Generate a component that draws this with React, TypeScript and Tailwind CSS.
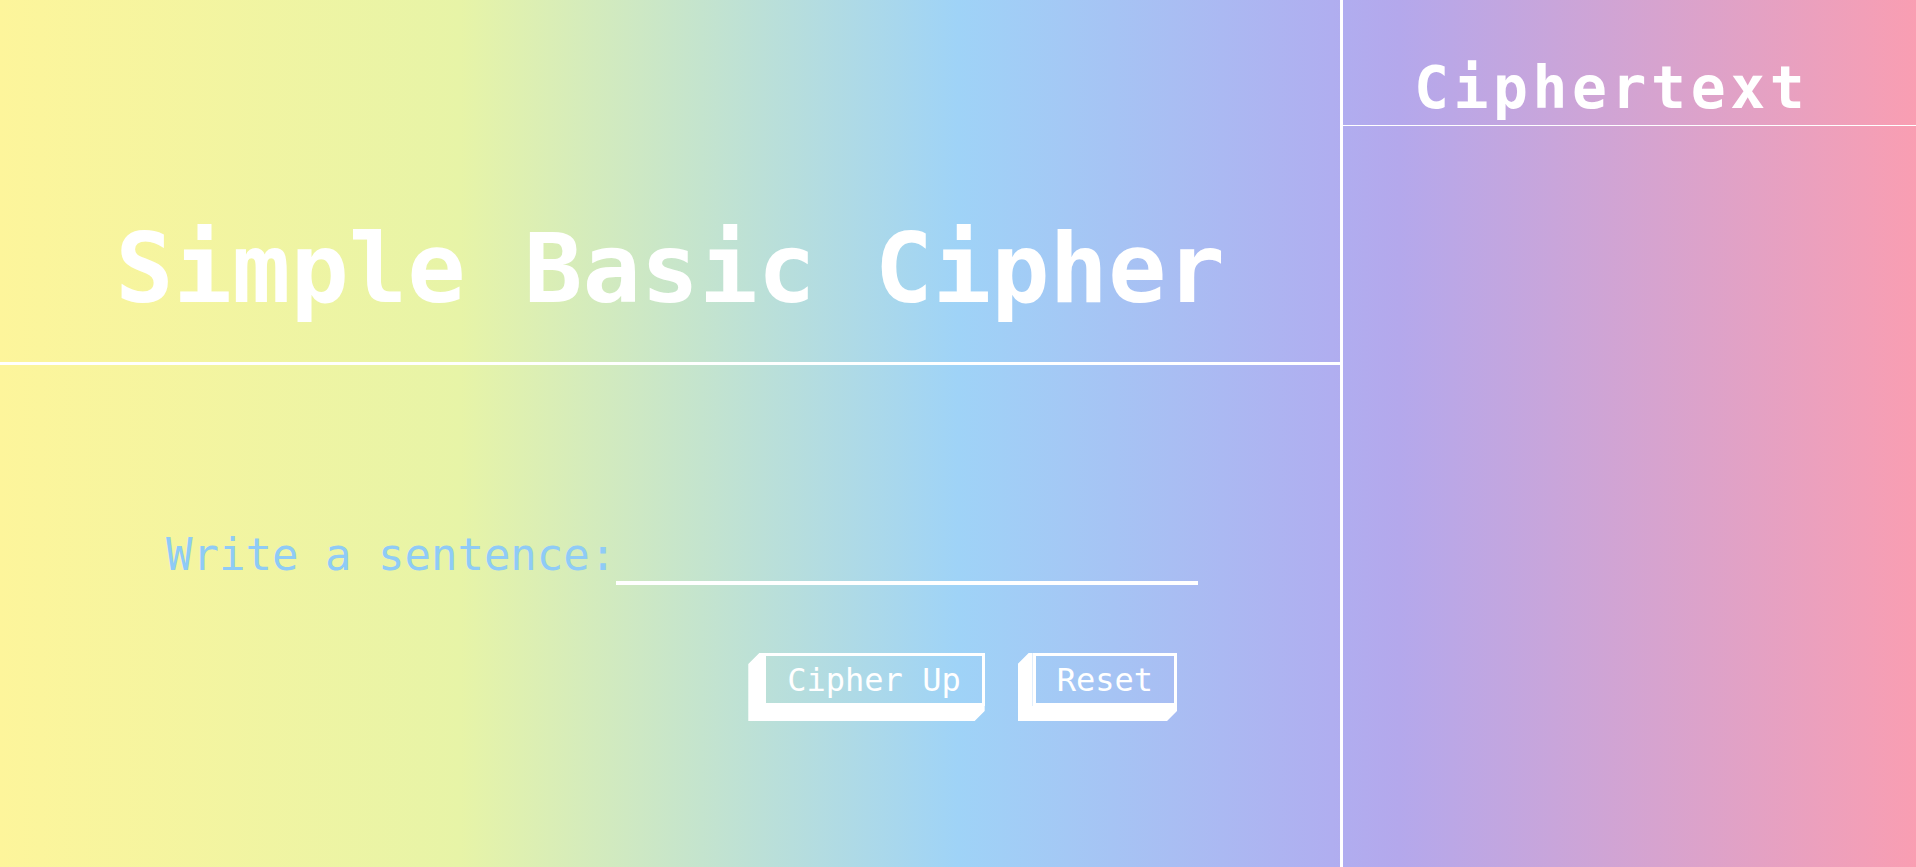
import React, { useState } from "react";

function ShadowButton({ label, onClick }: { label: string; onClick?: () => void }) {
  return (
    <button
      type="button"
      onClick={onClick}
      className="relative flex pl-[15px] pb-[15px] text-white cursor-pointer"
    >
      <span className="absolute inset-0 bg-white [clip-path:polygon(11px_0,15px_0,15px_calc(100%_-_15px),100%_calc(100%_-_15px),100%_calc(100%_-_10px),calc(100%_-_10px)_100%,0_100%,0_11px)]" />
      <span className="relative block border-[3px] border-white px-[21px] h-[53px] leading-[49px] text-[32px] whitespace-nowrap">
        {label}
      </span>
    </button>
  );
}

export default function App() {
  const [text, setText] = useState("");
  return (
    <div className="flex h-screen w-full overflow-hidden font-['DejaVu_Sans_Mono',monospace] bg-[linear-gradient(to_right,#fdf59b_0%,#e7f4a7_24%,#9fd3f7_50%,#b0aef0_69.5%,#b4a8ec_73%,#f99eb2_100%)]">
      <div className="flex w-[1343px] shrink-0 flex-col border-r-[3px] border-white">
        <header className="h-[365px] shrink-0 border-b-[3px] border-white pt-[220px] text-center">
          <h1 className="text-[97px] font-bold leading-none text-white whitespace-nowrap">
            Simple Basic Cipher
          </h1>
        </header>
        <main className="flex flex-col pt-[168px]">
          <form
            className="flex flex-col"
            onSubmit={(e) => e.preventDefault()}
          >
            <div className="flex items-end pl-[166px]">
              <label
                htmlFor="sentence"
                className="pb-[8px] text-[44px] leading-none text-[#8fcbf6] whitespace-nowrap"
              >
                Write a sentence:
              </label>
              <input
                id="sentence"
                value={text}
                onChange={(e) => setText(e.target.value)}
                className="h-[40px] w-[582px] border-b-4 border-white bg-transparent text-[28px] text-white outline-none"
              />
            </div>
            <div className="mt-[68px] flex justify-end gap-[33px] pr-[163px]">
              <ShadowButton label="Cipher Up" />
              <ShadowButton label="Reset" onClick={() => setText("")} />
            </div>
          </form>
        </main>
      </div>
      <aside className="flex flex-1 flex-col">
        <div className="h-[126px] border-b border-white pl-[71px] pt-[59px]">
          <h2 className="text-[58px] font-bold leading-none tracking-[4.6px] text-white whitespace-nowrap">
            Ciphertext
          </h2>
        </div>
      </aside>
    </div>
  );
}
